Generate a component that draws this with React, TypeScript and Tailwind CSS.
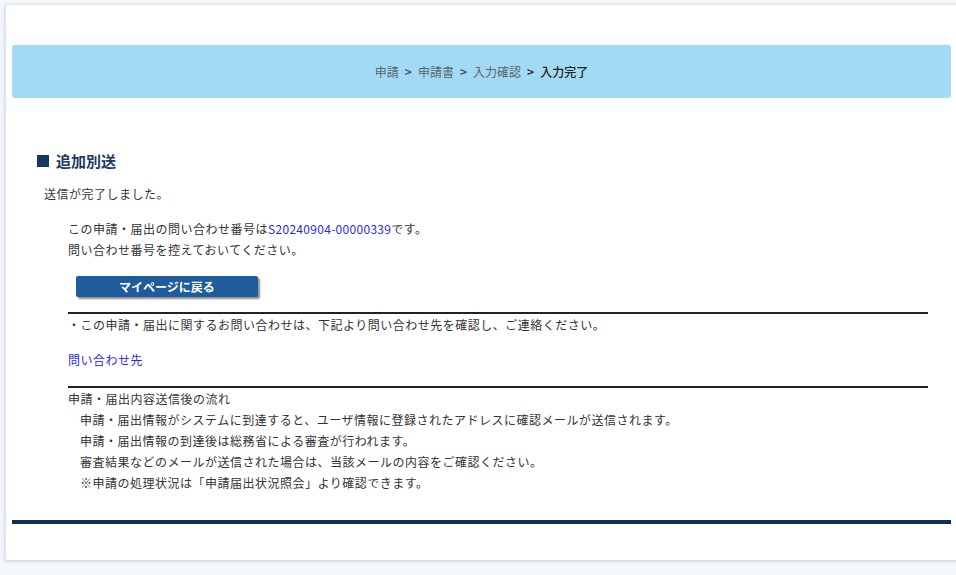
import React from "react";

export default function App() {
  const font = { fontFamily: '"Noto Sans CJK JP", "Noto Sans", sans-serif' };
  return (
    <div
      className="w-[956px] h-[575px] overflow-hidden bg-[#f3f6fb] pt-[4px] pl-[5px]"
      style={font}
    >
      <div className="w-[960px] h-[556px] bg-white border-l border-t border-[#e3e8ef] shadow-[0_1px_3px_rgba(0,0,0,0.18)] pl-[6px] pt-[40px] text-[12px] tracking-[0.5px] text-[#333]">
        {/* breadcrumb */}
        <div className="w-[939px] h-[53px] rounded-[3px] bg-[#a2daf5] flex items-center justify-center text-[12px] tracking-normal text-[#5a6570]">
          <span>申請</span>
          <span className="mx-[6px] font-bold text-[#4a5560]">&gt;</span>
          <span>申請書</span>
          <span className="mx-[6px] font-bold text-[#4a5560]">&gt;</span>
          <span>入力確認</span>
          <span className="mx-[6px] font-bold text-[#333]">&gt;</span>
          <span className="text-[#222] font-medium">入力完了</span>
        </div>

        {/* heading */}
        <div className="mt-[53px] ml-[25px] flex items-center h-[20px]">
          <span className="w-[12px] h-[12px] bg-[#173760]" />
          <span className="ml-[7px] text-[15px] font-bold text-[#1b3a63] tracking-normal">
            追加別送
          </span>
        </div>

        <div className="mt-[12px] ml-[32px] leading-[21px]">送信が完了しました。</div>

        <div className="ml-[56px] w-[860px]">
          <div className="mt-[14px] leading-[21px]">
            この申請・届出の問い合わせ番号は
            <span className="text-[#2b2bdd] tracking-[0.3px]">S20240904-00000339</span>
            です。
          </div>
          <div className="leading-[21px]">問い合わせ番号を控えておいてください。</div>

          <div className="mt-[16px] ml-[8px] w-[182px] h-[21px] rounded-[2px] bg-[#1f5c9c] shadow-[2px_2px_2px_rgba(0,0,0,0.45)] flex items-center justify-center text-white font-bold text-[12px] tracking-normal">
            マイページに戻る
          </div>

          <div className="mt-[15px] h-[2px] bg-[#222]" />
          <div className="leading-[21px]">
            ・この申請・届出に関するお問い合わせは、下記より問い合わせ先を確認し、ご連絡ください。
          </div>
          <div className="mt-[14px] leading-[21px] text-[#2b2bdd]">問い合わせ先</div>

          <div className="mt-[16px] h-[2px] bg-[#222]" />
          <div className="leading-[21px]">申請・届出内容送信後の流れ</div>
          <div className="ml-[12px] leading-[21px]">
            <div>
              申請・届出情報がシステムに到達すると、ユーザ情報に登録されたアドレスに確認メールが送信されます。
            </div>
            <div>申請・届出情報の到達後は総務省による審査が行われます。</div>
            <div>審査結果などのメールが送信された場合は、当該メールの内容をご確認ください。</div>
            <div>※申請の処理状況は「申請届出状況照会」より確認できます。</div>
          </div>
        </div>

        <div className="mt-[27px] w-[939px] h-[4px] bg-[#0e2f5a]" />
      </div>
    </div>
  );
}
